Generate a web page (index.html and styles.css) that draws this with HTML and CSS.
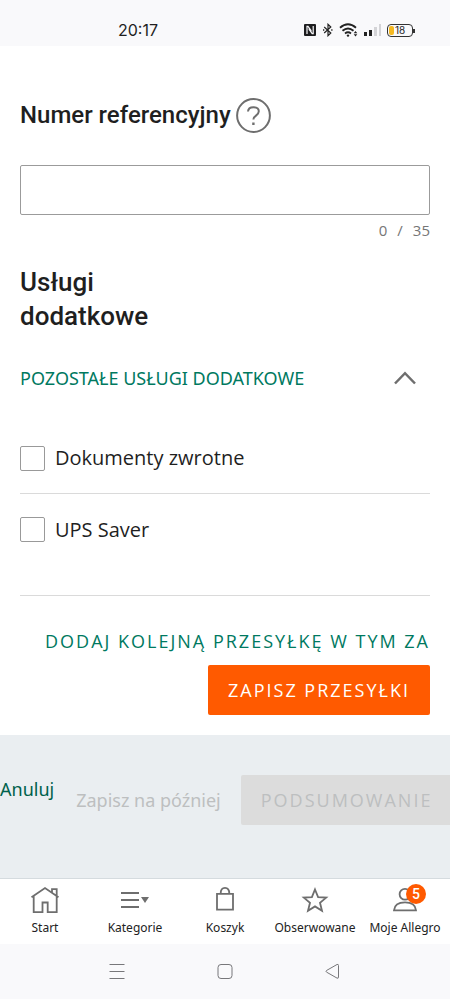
FILE: index.html
```html
<!DOCTYPE html>
<html lang="pl">
<head>
<meta charset="utf-8">
<meta name="viewport" content="width=device-width, initial-scale=1">
<title>Przesyłka – usługi dodatkowe</title>
<link rel="stylesheet" href="styles.css">
</head>
<body>
<header class="status">
  <time class="status-time">20:17</time>
  <div class="status-icons">
    <svg width="14" height="14" viewBox="0 0 14 14"><path fill="#1d1d1f" d="M2 1h10q1 0 1 1v10q0 1-1 1H2q-1 0-1-1V2q0-1 1-1z"/><path fill="none" stroke="#f9f9fb" stroke-width="1.2" d="M4 11V3.300h1L8 7.500V9M10.200 3v7.700h-1L6.200 6.500V5"/></svg>
    <svg width="12" height="14" viewBox="0 0 12 14"><path fill="none" stroke="#222" stroke-width="1.2" d="M2.200 4l6.600 6L6 12.700V1.300L8.800 4l-6.600 6"/><path fill="#222" d="M1 6.300h1.300v1.400H1zM9.200 6.300h1.300v1.400H9.200z"/></svg>
    <svg width="19" height="14" viewBox="0 0 19 14"><g fill="none" stroke="#222" stroke-width="1.800"><path d="M1 4.800q8-7 16 0"/><path d="M3.500 7.800q5.500-4.700 11 0"/><path d="M6 10.500q3-2.400 6 0"/></g><circle cx="9" cy="12.600" r="1.200" fill="#222"/><path fill="#222" d="M16.500 8l1.800 2.200h-3.600zM16.500 13.500l1.800-2.200h-3.600z"/></svg>
    <svg width="19" height="14" viewBox="0 0 19 14"><path fill="#222" d="M1 9h3v4H1zM6 7h3v6H6z"/><path fill="#d4d4d7" d="M11 4h3v9h-3zM16 1h2v12h-2z"/></svg>
    <span class="battery"><span class="battery-level"></span>18</span>
  </div>
</header>

<main class="form">
  <div class="field-title">
    <label for="ref">Numer referencyjny</label>
    <button class="help" type="button" aria-label="Pomoc">
      <svg width="35" height="35" viewBox="0 0 35 35" fill="none" stroke="#6e6e6e" stroke-width="2"><circle cx="17.500" cy="17.500" r="16.400"/><path d="M12 13.500q.3-4.300 5.400-4.300 5.400 0 5.400 4.100 0 2.400-2.800 4.300-2.600 1.700-2.600 4"/><path stroke-width="2.400" d="M17.400 24.500V27"/></svg>
    </button>
  </div>
  <input class="text-field" id="ref" type="text" maxlength="35">
  <p class="counter"><span>0</span><span>/</span><span>35</span></p>

  <h2 class="heading">Usługi<br>dodatkowe</h2>
  <button class="accordion" type="button" aria-expanded="true">
    <span>POZOSTAŁE USŁUGI DODATKOWE</span>
    <svg width="22" height="14" viewBox="0 0 22 14"><path fill="none" stroke="#6e6e6e" stroke-width="2.500" d="M1 12.500L11 2.200l10 10.300"/></svg>
  </button>
  <label class="option"><input type="checkbox">Dokumenty zwrotne</label>
  <label class="option option-last"><input type="checkbox">UPS Saver</label>

  <div class="actions">
    <a class="add-link" href="#">DODAJ KOLEJNĄ PRZESYŁKĘ W TYM ZA</a>
    <button class="primary" type="button">ZAPISZ PRZESYŁKI</button>
  </div>
</main>

<section class="summary">
  <a class="cancel" href="#">Anuluj</a>
  <button class="later" type="button" disabled>Zapisz na później</button>
  <button class="next" type="button" disabled>PODSUMOWANIE</button>
</section>

<nav class="tabs">
  <a href="#">
    <svg width="30" height="28" viewBox="0 0 30 28" fill="none" stroke="#6e6e6e" stroke-width="1.800"><path d="M1.500 11.300L15 2l13.500 9.300M3.700 10v16.100h8.800V16.500h5.200v9.600h9V10M22 6.500V3.200h4.700v6.600"/></svg>
    Start</a>
  <a href="#">
    <svg width="30" height="28" viewBox="0 0 30 28"><path fill="none" stroke="#6e6e6e" stroke-width="1.800" d="M1 7h18M1 14h18M1 21h18"/><path fill="#6e6e6e" d="M21 11h8l-4 6z"/></svg>
    Kategorie</a>
  <a href="#">
    <svg width="30" height="28" viewBox="0 0 30 28" fill="none" stroke="#6e6e6e" stroke-width="1.800"><path d="M7 7.900h16v15.800H7zM10.700 7.500q0-5.700 4.300-5.700t4.300 5.700"/></svg>
    Koszyk</a>
  <a href="#">
    <svg width="30" height="28" viewBox="0 0 30 28" fill="none" stroke="#6e6e6e" stroke-width="1.800"><path d="M15 3.500l3.100 7.600 8.100.5-6.200 5.200 2 8-7-4.400-7 4.400 2-8-6.200-5.200 8.100-.5z"/></svg>
    Obserwowane</a>
  <a href="#">
    <span class="account">
      <svg width="30" height="28" viewBox="0 0 30 28" fill="none" stroke="#6e6e6e" stroke-width="1.800"><circle cx="15" cy="8.200" r="5.400"/><path d="M4 24.300q.6-8 11-8t11 8z"/></svg>
      <span class="badge">5</span>
    </span>
    Moje Allegro</a>
</nav>

<footer class="system">
  <svg width="18" height="18" viewBox="0 0 18 18" fill="none" stroke="#77777a"><path d="M1.500 2.500h15M1.500 9.500h15M1.500 16.500h15"/></svg>
  <svg width="18" height="18" viewBox="0 0 18 18" fill="none" stroke="#77777a"><rect x="2" y="2.500" width="14" height="14" rx="3"/></svg>
  <svg width="18" height="18" viewBox="0 0 18 18" fill="none" stroke="#77777a"><path stroke-linejoin="round" d="M2.500 8.500q-1 .8 0 1.600l10.500 6q1.500.6 1.500-1V3.500q0-1.600-1.500-1z"/></svg>
</footer>
</body>
</html>
```
FILE: styles.css
```css
* {
  box-sizing: border-box;
}

body {
  margin: 0;
  min-height: 100vh;
  display: flex;
  flex-direction: column;
  overflow-x: hidden;
  background: #fff;
  color: #1f1f1f;
  font-family: "Noto Sans", "Open Sans", sans-serif;
  font-size: 18px;
  line-height: 24px;
}

button {
  padding: 0;
  border: 0;
  background: none;
  font: inherit;
  white-space: nowrap;
}

a {
  text-decoration: none;
}

svg {
  display: block;
  flex: none;
}

.status {
  display: flex;
  justify-content: space-between;
  align-items: center;
  padding: 14px 37px 0 118px;
  height: 46px;
  background: #f9f9fb;
}

.status-time {
  font: 400 16px/20px Inter, sans-serif;
}

.status-icons {
  display: flex;
  align-items: center;
  gap: 5px;
}

.battery {
  position: relative;
  display: flex;
  align-items: center;
  gap: 1px;
  width: 26px;
  height: 13px;
  padding: 1px;
  border: 1px solid #333;
  border-radius: 4px;
  font: 10px/10px Inter, sans-serif;
}

.battery::after {
  content: "";
  position: absolute;
  right: -3px;
  top: 4px;
  width: 2px;
  height: 4px;
  background: #333;
}

.battery-level {
  width: 5px;
  height: 9px;
  border-radius: 2px;
  background: #f5b921;
}

.form {
  display: flex;
  flex-direction: column;
  flex: 1;
  padding: 52px 20px 20px;
}

.field-title {
  display: flex;
  align-items: center;
  gap: 5px;
  font: 500 24px/35px Roboto, sans-serif;
}

.text-field {
  width: 100%;
  height: 50px;
  margin-top: 32px;
  padding: 0 12px;
  border: 1px solid #9b9b9b;
  border-radius: 2px;
  font: inherit;
}

.counter {
  display: flex;
  justify-content: flex-end;
  gap: 10px;
  margin: 4px 0 0;
  color: #767676;
  font: 15px/22px "Open Sans", sans-serif;
}

.heading {
  margin: 24px 0 0;
  font: 500 26px/34px Roboto, sans-serif;
}

.accordion {
  display: flex;
  justify-content: space-between;
  align-items: center;
  margin-top: 31px;
  padding-right: 14px;
  color: #00795f;
  line-height: 28px;
}

.option {
  display: flex;
  align-items: center;
  gap: 10px;
  height: 71px;
  border-bottom: 1px solid #dadada;
  font-family: "Open Sans", sans-serif;
  font-size: 20px;
}

.accordion + .option {
  margin-top: 31px;
}

.option-last {
  height: 102px;
  padding-bottom: 30px;
}

.option input {
  appearance: none;
  width: 25px;
  height: 25px;
  margin: 0;
  border: 1px solid #999;
  border-radius: 2px;
}

.actions {
  display: flex;
  flex-direction: column;
  align-items: flex-end;
  gap: 12px;
  margin-top: 33px;
}

.add-link,
.primary,
.next {
  font-family: "Open Sans", sans-serif;
  letter-spacing: 2px;
  white-space: nowrap;
}

.add-link {
  color: #00795f;
}

.primary,
.next {
  height: 50px;
  padding: 0 20px;
  border-radius: 2px;
}

.primary {
  background: #ff5a00;
  color: #fff;
}

.summary {
  display: flex;
  align-items: center;
  height: 143px;
  padding-bottom: 14px;
  background: #eaeef1;
}

.cancel {
  padding-bottom: 22px;
  color: #00614c;
}

.later,
.next {
  color: #bdbfc0;
}

.later {
  margin-left: 22px;
}

.next {
  flex: 1;
  margin-left: 20px;
  background: #dcdcdc;
}

.tabs {
  display: grid;
  grid-template-columns: repeat(5, 1fr);
  height: 66px;
  padding-top: 7px;
  border-top: 1px solid #d5dbdf;
}

.tabs a {
  display: flex;
  flex-direction: column;
  align-items: center;
  color: #222;
  font-size: 12px;
  line-height: 28px;
  white-space: nowrap;
}

.account {
  position: relative;
}

.badge {
  position: absolute;
  top: -2px;
  right: -6px;
  width: 20px;
  height: 20px;
  border-radius: 50%;
  background: #ff5a00;
  color: #fff;
  font: 500 14px/20px Roboto, sans-serif;
  text-align: center;
}

.system {
  display: flex;
  justify-content: center;
  gap: 90px;
  height: 55px;
  padding-top: 18px;
  background: #f9f9fb;
}
```
